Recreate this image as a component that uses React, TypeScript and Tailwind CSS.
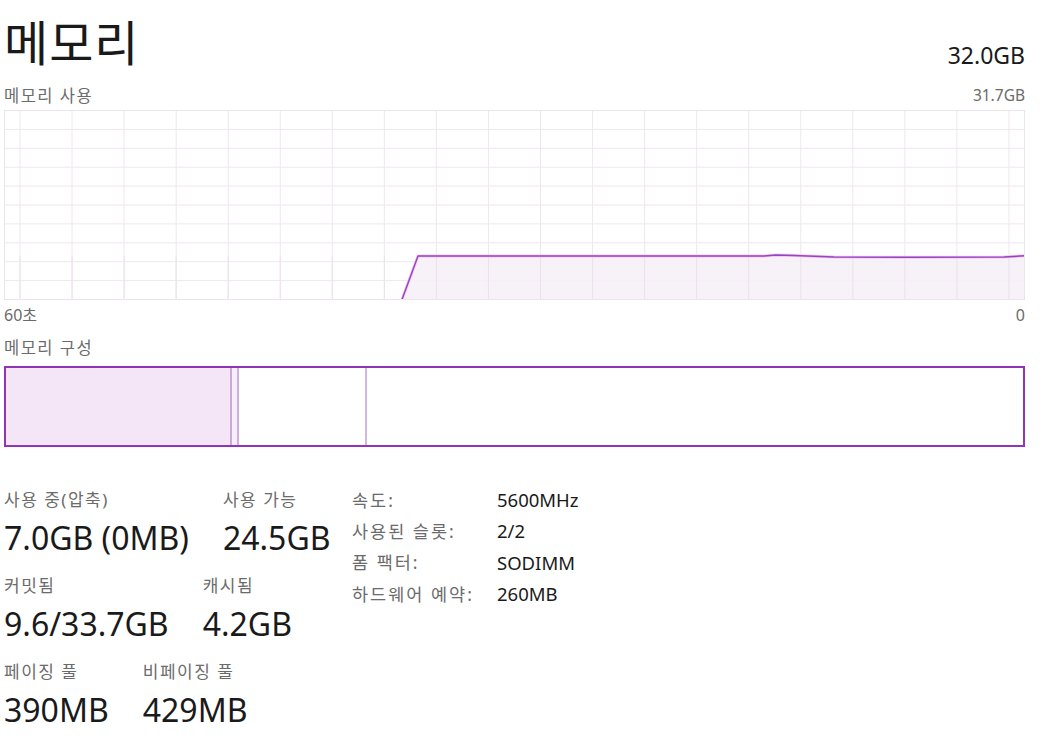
import React from "react";

/* ── chart geometry ─────────────────────────────── */
const W = 1021;
const H = 190;
const gridX = Array.from({ length: 20 }, (_, i) => 16 + i * 52.05);
const gridY = Array.from({ length: 9 }, (_, i) => 0.5 + (i + 1) * 18.9);

const usage: [number, number][] = [
  [398, 189.5],
  [414, 146],
  [600, 146],
  [760, 146],
  [772, 145],
  [790, 145.5],
  [830, 147],
  [900, 147.2],
  [1000, 147],
  [1021, 145.8],
];

const linePath = usage.map(([x, y], i) => `${i ? "L" : "M"}${x} ${y}`).join(" ");
const fillPath = `${linePath} L${W} ${H} L398 ${H} Z`;

/* ── stat data ──────────────────────────────────── */
const bigStats = [
  [
    { label: "사용 중(압축)", value: "7.0GB (0MB)" },
    { label: "사용 가능", value: "24.5GB" },
  ],
  [
    { label: "커밋됨", value: "9.6/33.7GB" },
    { label: "캐시됨", value: "4.2GB" },
  ],
  [
    { label: "페이징 풀", value: "390MB" },
    { label: "비페이징 풀", value: "429MB" },
  ],
];

const specs = [
  { label: "속도:", value: "5600MHz" },
  { label: "사용된 슬롯:", value: "2/2" },
  { label: "폼 팩터:", value: "SODIMM" },
  { label: "하드웨어 예약:", value: "260MB" },
];

function UsageChart() {
  return (
    <svg width={W} height={H} viewBox={`0 0 ${W} ${H}`} className="block">
      {gridX.map((x) => (
        <line key={x} x1={x} y1={0} x2={x} y2={H} stroke="#eee7ef" strokeWidth={1} />
      ))}
      {gridY.map((y) => (
        <line key={y} x1={0} y1={y} x2={W} y2={y} stroke="#eee7ef" strokeWidth={1} />
      ))}
      <path d={fillPath} fill="#f6f0f7" fillOpacity={0.9} />
      {gridX.map((x) => (
        <line key={`o${x}`} x1={x} y1={146} x2={x} y2={H} stroke="#ebe1ed" strokeWidth={1} />
      ))}
      <path d={linePath} fill="none" stroke="#f0c6f0" strokeWidth={3} strokeLinejoin="round" />
      <path d={linePath} fill="none" stroke="#9645c0" strokeWidth={1.4} strokeLinejoin="round" />
      <rect x={0.5} y={0.5} width={W - 1} height={H - 1} fill="none" stroke="#ebe4ec" strokeWidth={1} />
    </svg>
  );
}

export default function App() {
  return (
    <main className="w-[1047px] h-[750px] bg-white pl-[4px] pr-[22px] font-['Noto_Sans','Noto_Sans_CJK_KR',sans-serif] text-[#1a1a1a] overflow-hidden">
      {/* header */}
      <div className="flex justify-between items-end h-[72px]">
        <h1 className="text-[48px] leading-[58px] font-normal tracking-[1px]">메모리</h1>
        <div className="text-[23px] leading-[28px] mb-[3px]">32.0GB</div>
      </div>

      <div className="flex justify-between items-center h-[38px] pt-[10px] text-[#6b6b6b]">
        <span className="text-[16.5px] tracking-[1.5px]">메모리 사용</span>
        <span className="text-[15.5px]">31.7GB</span>
      </div>

      <UsageChart />

      <div className="flex justify-between items-center h-[30px] text-[16px] text-[#6b6b6b]">
        <span>60초</span>
        <span>0</span>
      </div>

      <div className="flex items-center h-[36px] text-[16.5px] tracking-[1.5px] text-[#6b6b6b]">메모리 구성</div>

      {/* composition bar */}
      <div className="flex h-[81px] border-2 border-[#9234b5] bg-white">
        <div className="w-[226px] bg-[#f5e6f7] border-r-2 border-[#c9a9da]" />
        <div className="w-[7px] bg-[#f7eef9] border-r-2 border-[#cdb0dd]" />
        <div className="w-[128px] border-r-2 border-[#d2b8e0]" />
        <div className="flex-1" />
      </div>

      {/* stats */}
      <div className="flex mt-[40px]">
        <div className="w-[348px] flex flex-col">
          {bigStats.map((row, r) => (
            <div key={r} className="flex gap-[34px] h-[86px]">
              {row.map((s) => (
                <div key={s.label} className="flex flex-col">
                  <span className="text-[17px] leading-[26px] tracking-[1.5px] text-[#6b6b6b]">{s.label}</span>
                  <span className="text-[32px] leading-[50px]">{s.value}</span>
                </div>
              ))}
            </div>
          ))}
        </div>
        <div className="grid grid-cols-[145px_auto] auto-rows-[31.4px] items-center -mt-[3px]">
          {specs.map((s) => (
            <React.Fragment key={s.label}>
              <span className="text-[17.5px] tracking-[2px] text-[#6b6b6b]">{s.label}</span>
              <span className="text-[18.5px]">{s.value}</span>
            </React.Fragment>
          ))}
        </div>
      </div>
    </main>
  );
}
